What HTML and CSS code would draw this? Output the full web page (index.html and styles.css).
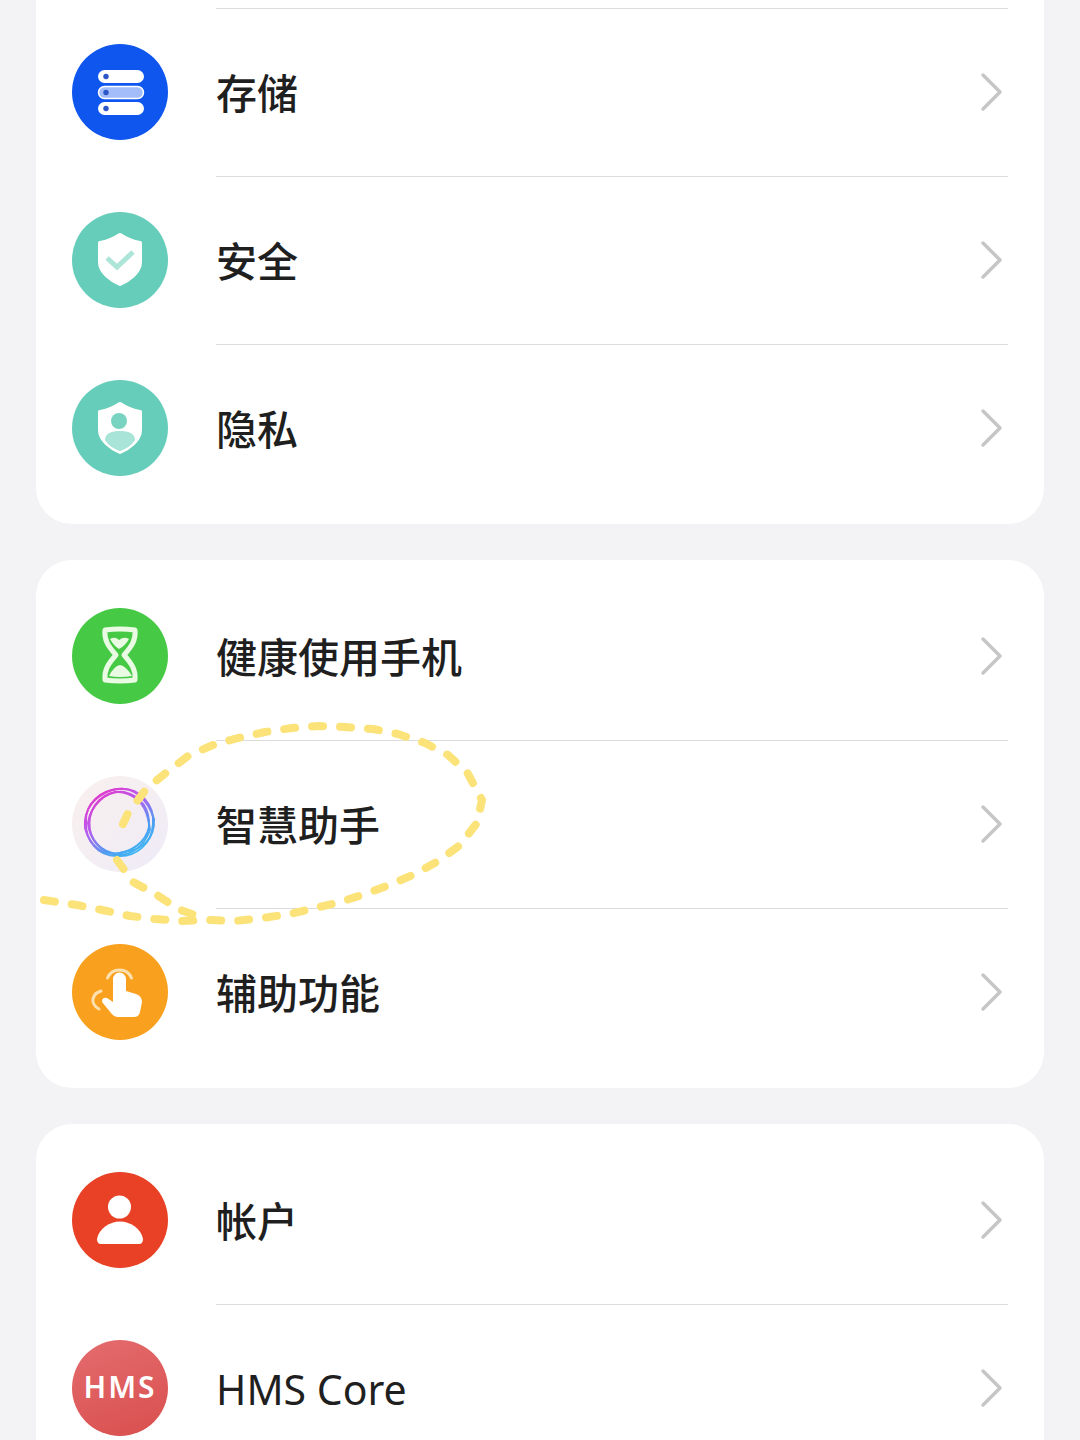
FILE: index.html
```html
<!DOCTYPE html>
<html lang="zh-CN">
<head>
    <meta charset="UTF-8">
    <meta name="viewport" content="width=device-width, initial-scale=1.0">
    <title>设置</title>
    <link rel="stylesheet" href="styles.css">
</head>
<body>
    <div class="page">
        <div class="card card-first">
            <div class="row">
                <svg class="icon" viewBox="0 0 96 96">
                    <circle cx="48" cy="48" r="48" fill="#0f56ef"/>
                    <rect x="26" y="26" width="46" height="13" rx="6.5" fill="#fff"/>
                    <rect x="26.5" y="42.5" width="45" height="12" rx="6" fill="#a3bdfb" stroke="#fff" stroke-width="1.5"/>
                    <rect x="26" y="58" width="46" height="13" rx="6.5" fill="#fff"/>
                    <circle cx="34" cy="32.5" r="2.7" fill="#2b55c9"/>
                    <circle cx="34" cy="48.5" r="2.7" fill="#2b55c9"/>
                    <circle cx="34" cy="64.5" r="2.7" fill="#2b55c9"/>
                </svg>
                <div class="row-body">
                    <span class="label">存储</span>
                    <svg class="arrow" viewBox="0 0 24 40"><path d="M3 3 L20 20 L3 37"/></svg>
                </div>
            </div>
            <div class="row">
                <svg class="icon" viewBox="0 0 96 96">
                    <circle cx="48" cy="48" r="48" fill="#65cdb9"/>
                    <path d="M48 23 C54 27 61 30 68 31 V50 C68 60 57 68 48 72 C39 68 28 60 28 50 V31 C35 30 42 27 48 23Z" fill="#fff" stroke="#fff" stroke-width="4" stroke-linejoin="round"/>
                    <path d="M35 46 L45 55 L61 40" fill="none" stroke="#aee5d9" stroke-width="5"/>
                </svg>
                <div class="row-body">
                    <span class="label">安全</span>
                    <svg class="arrow" viewBox="0 0 24 40"><path d="M3 3 L20 20 L3 37"/></svg>
                </div>
            </div>
            <div class="row">
                <svg class="icon" viewBox="0 0 96 96">
                    <circle cx="48" cy="48" r="48" fill="#65cdb9"/>
                    <path d="M48 24 C54 28 61 31 68 32 V50 C68 60 57 68 48 72 C39 68 28 60 28 50 V32 C35 31 42 28 48 24Z" fill="#fff" stroke="#fff" stroke-width="4" stroke-linejoin="round"/>
                    <circle cx="47" cy="41" r="8" fill="#79d3c1"/>
                    <path d="M33 60 C33 53 40 51 48 51 C56 51 63 53 63 60 C60 65 54 69 48 71 C42 69 36 65 33 60Z" fill="#a8e4d7"/>
                </svg>
                <div class="row-body">
                    <span class="label">隐私</span>
                    <svg class="arrow" viewBox="0 0 24 40"><path d="M3 3 L20 20 L3 37"/></svg>
                </div>
            </div>
        </div>

        <div class="card">
            <div class="row">
                <svg class="icon" viewBox="0 0 96 96">
                    <circle cx="48" cy="48" r="48" fill="#46ca46"/>
                    <path d="M33 22 Q48 20 63 22 C64 32 60 38 52 47 C60 56 64 62 63 72 Q48 74 33 72 C32 62 36 56 44 47 C36 38 32 32 33 22Z" fill="none" stroke="#e9fbe3" stroke-width="5" stroke-linejoin="round"/>
                    <path d="M38 31 Q43 28 47 32 Q52 28 57 31 Q53 38 47 41 Q42 38 38 31Z" fill="#e9fbe3"/>
                    <path d="M37 68 Q42 58 48 57 Q54 58 60 68 Q48 70 37 68Z" fill="#e9fbe3"/>
                </svg>
                <div class="row-body">
                    <span class="label">健康使用手机</span>
                    <svg class="arrow" viewBox="0 0 24 40"><path d="M3 3 L20 20 L3 37"/></svg>
                </div>
            </div>
            <div class="row">
                <svg class="icon" viewBox="0 0 96 96">
                    <defs>
                        <linearGradient id="halo" x1="0" y1="0" x2="1" y2="1">
                            <stop offset="0" stop-color="#faf1ed"/>
                            <stop offset="1" stop-color="#eeebf8"/>
                        </linearGradient>
                        <linearGradient id="ring" gradientUnits="userSpaceOnUse" x1="20" y1="10" x2="70" y2="85">
                            <stop offset="0" stop-color="#ee2fc0"/>
                            <stop offset="0.4" stop-color="#b85cf0"/>
                            <stop offset="0.7" stop-color="#4f9cf2"/>
                            <stop offset="1" stop-color="#35c4f2"/>
                        </linearGradient>
                    </defs>
                    <circle cx="48" cy="48" r="48" fill="url(#halo)"/>
                    <g fill="none" stroke="url(#ring)" stroke-width="2">
                        <path d="M47 13 C68 11 83 30 81 48 C80 68 64 81 46 80 C26 81 13 64 14 46 C13 28 28 14 47 13Z"/>
                        <path d="M52 16 C70 20 78 34 77 51 C74 66 60 76 43 78 C27 76 17 61 16 47 C18 31 33 14 52 16Z"/>
                        <path d="M40 14 C62 8 76 24 82 43 C83 62 71 74 52 76 C30 83 17 68 13 52 C11 33 24 19 40 14Z"/>
                        <path d="M56 18 C72 24 76 38 78 54 C72 70 58 83 40 77 C24 73 15 58 18 41 C22 24 38 11 56 18Z"/>
                    </g>
                </svg>
                <div class="row-body">
                    <span class="label">智慧助手</span>
                    <svg class="arrow" viewBox="0 0 24 40"><path d="M3 3 L20 20 L3 37"/></svg>
                </div>
            </div>
            <div class="row">
                <svg class="icon" viewBox="0 0 96 96">
                    <circle cx="48" cy="48" r="48" fill="#f9a01e"/>
                    <path d="M41 35 a6.5 6.5 0 0 1 13 0 V47 L64 50 Q70 52 70 58 L68 68 Q67 73 62 73 H46 Q42 73 39 69 L30 58 Q30 53 35 54 L41 58Z" fill="#fff"/>
                    <path d="M35.5 34 A13 13 0 0 1 59.5 34" fill="none" stroke="#fde0b0" stroke-width="3" stroke-linecap="round"/>
                    <path d="M29 47 Q20 50 21 58 Q22 62 27 65" fill="none" stroke="#fde0b0" stroke-width="3" stroke-linecap="round"/>
                </svg>
                <div class="row-body">
                    <span class="label">辅助功能</span>
                    <svg class="arrow" viewBox="0 0 24 40"><path d="M3 3 L20 20 L3 37"/></svg>
                </div>
            </div>
        </div>

        <div class="card">
            <div class="row">
                <svg class="icon" viewBox="0 0 96 96">
                    <circle cx="48" cy="48" r="48" fill="#e84125"/>
                    <circle cx="47.5" cy="35" r="11.5" fill="#fff"/>
                    <path d="M29 72 Q25 72 25 67 C27 56 38 49.5 48 49.5 C58 49.5 69 56 71 67 Q71 72 67 72Z" fill="#fff"/>
                </svg>
                <div class="row-body">
                    <span class="label">帐户</span>
                    <svg class="arrow" viewBox="0 0 24 40"><path d="M3 3 L20 20 L3 37"/></svg>
                </div>
            </div>
            <div class="row">
                <div class="icon icon-hms">HMS</div>
                <div class="row-body">
                    <span class="label label-latin">HMS Core</span>
                    <svg class="arrow" viewBox="0 0 24 40"><path d="M3 3 L20 20 L3 37"/></svg>
                </div>
            </div>
        </div>

        <!-- trazo amarillo a mano sobre la lista -->
        <svg class="scribble" viewBox="0 0 1080 1440">
            <polyline points="44,900 77,905 102,910 130,916 155,919 182,921 207,920 235,921 262,918 290,914 315,908 340,902 365,894 392,884 417,873 440,860 460,845 477,823 482,800 467,772 448,755 425,743 398,734 373,729 345,727 318,726 292,728 265,732 238,738 213,745 188,756 167,772 147,788 128,813 118,835"/>
            <polyline points="117,860 133,882 157,895 178,909 208,920"/>
        </svg>
    </div>
</body>
</html>
```

FILE: styles.css
```css
body {
    margin: 0;
    background-color: #f3f3f5;
    font-family: "Noto Sans", "Noto Sans CJK SC", sans-serif;
    color: #1f1f1f;
}

.page {
    position: relative;
    height: 1440px;
    overflow: hidden;
    padding: 0 36px;
    display: flex;
    flex-direction: column;
    gap: 36px;
    box-sizing: border-box;
}

.card {
    flex-shrink: 0;
    background-color: #fff;
    border-radius: 36px;
    padding: 12px 0;
}

.card-first {
    border-radius: 0 0 36px 36px;
    padding-top: 8px;
}

.row {
    display: flex;
    align-items: center;
    height: 168px;
    padding: 0 36px;
}

.icon {
    flex-shrink: 0;
    width: 96px;
    height: 96px;
}

.icon-hms {
    display: flex;
    align-items: center;
    justify-content: center;
    box-sizing: border-box;
    padding-bottom: 3px;
    border-radius: 50%;
    background: linear-gradient(160deg, #e46c6e, #d94f4e);
    color: #fff;
    font-size: 30px;
    font-weight: 600;
    letter-spacing: 2px;
}

.row-body {
    flex: 1;
    align-self: stretch;
    display: flex;
    align-items: center;
    justify-content: space-between;
    margin-left: 48px;
    border-top: 1px solid transparent;
}

.row + .row .row-body,
.card-first .row-body {
    border-top-color: #dcdcdc;
}

.label {
    font-size: 41px;
    line-height: 56px;
    font-weight: 500;
}

.label-latin {
    font-weight: 400;
}

.arrow {
    width: 24px;
    height: 40px;
    margin-right: 4px;
    margin-bottom: 2px;
    fill: none;
    stroke: #c6c6c6;
    stroke-width: 3.5;
    stroke-linecap: round;
    stroke-linejoin: round;
}

.scribble {
    position: absolute;
    left: 0;
    top: 0;
    width: 1080px;
    height: 1440px;
    fill: none;
    stroke: #fbe37a;
    stroke-width: 8;
    stroke-linecap: round;
    stroke-linejoin: round;
    stroke-dasharray: 11 17;
}
```
